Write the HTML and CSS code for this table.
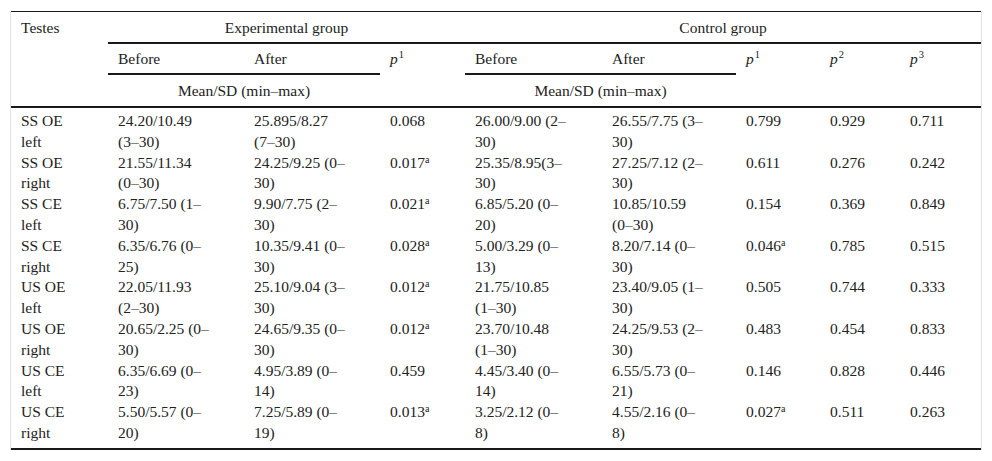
FILE: index.html
```html
<!DOCTYPE html>
<html lang="en">
<head>
<meta charset="utf-8">
<title>Table</title>
<link rel="stylesheet" href="styles.css">
</head>
<body>
<div class="wrap">
<table class="data">
  <colgroup>
    <col class="c1"><col class="c2"><col class="c3"><col class="c4"><col class="c5"><col class="c6"><col class="c7"><col class="c8"><col class="c9">
  </colgroup>
  <thead>
    <tr class="r1">
      <th rowspan="3" class="stub">Testes</th>
      <th colspan="3" class="grp">Experimental group</th>
      <th colspan="5" class="grp">Control group</th>
    </tr>
    <tr class="r2">
      <th class="sub">Before</th>
      <th class="sub">After</th>
      <th rowspan="2" class="pc"><i>p</i><sup>1</sup></th>
      <th class="sub">Before</th>
      <th class="sub">After</th>
      <th rowspan="2" class="pc"><i>p</i><sup>1</sup></th>
      <th rowspan="2" class="pc"><i>p</i><sup>2</sup></th>
      <th rowspan="2" class="pc"><i>p</i><sup>3</sup></th>
    </tr>
    <tr class="r3">
      <th colspan="2" class="mean">Mean/SD (min–max)</th>
      <th colspan="2" class="mean">Mean/SD (min–max)</th>
    </tr>
  </thead>
  <tbody>
    <tr>
      <td class="name">SS OE left</td><td class="val">24.20/10.49 (3–30)</td><td class="val">25.895/8.27 (7–30)</td><td class="p">0.068</td>
      <td class="val">26.00/9.00 (2–30)</td><td class="val">26.55/7.75 (3–30)</td><td class="p">0.799</td><td class="p">0.929</td><td class="p">0.711</td>
    </tr>
    <tr>
      <td class="name">SS OE right</td><td class="val">21.55/11.34 (0–30)</td><td class="val">24.25/9.25 (0–30)</td><td class="p">0.017<sup class="sig">a</sup></td>
      <td class="val">25.35/8.95(3–30)</td><td class="val">27.25/7.12 (2–30)</td><td class="p">0.611</td><td class="p">0.276</td><td class="p">0.242</td>
    </tr>
    <tr>
      <td class="name">SS CE left</td><td class="val">6.75/7.50 (1–30)</td><td class="val">9.90/7.75 (2–30)</td><td class="p">0.021<sup class="sig">a</sup></td>
      <td class="val">6.85/5.20 (0–20)</td><td class="val">10.85/10.59 (0–30)</td><td class="p">0.154</td><td class="p">0.369</td><td class="p">0.849</td>
    </tr>
    <tr>
      <td class="name">SS CE right</td><td class="val">6.35/6.76 (0–25)</td><td class="val">10.35/9.41 (0–30)</td><td class="p">0.028<sup class="sig">a</sup></td>
      <td class="val">5.00/3.29 (0–13)</td><td class="val">8.20/7.14 (0–30)</td><td class="p">0.046<sup class="sig">a</sup></td><td class="p">0.785</td><td class="p">0.515</td>
    </tr>
    <tr>
      <td class="name">US OE left</td><td class="val">22.05/11.93 (2–30)</td><td class="val">25.10/9.04 (3–30)</td><td class="p">0.012<sup class="sig">a</sup></td>
      <td class="val">21.75/10.85 (1–30)</td><td class="val">23.40/9.05 (1–30)</td><td class="p">0.505</td><td class="p">0.744</td><td class="p">0.333</td>
    </tr>
    <tr>
      <td class="name">US OE right</td><td class="val">20.65/2.25 (0–30)</td><td class="val">24.65/9.35 (0–30)</td><td class="p">0.012<sup class="sig">a</sup></td>
      <td class="val">23.70/10.48 (1–30)</td><td class="val">24.25/9.53 (2–30)</td><td class="p">0.483</td><td class="p">0.454</td><td class="p">0.833</td>
    </tr>
    <tr>
      <td class="name">US CE left</td><td class="val">6.35/6.69 (0–23)</td><td class="val">4.95/3.89 (0–14)</td><td class="p">0.459</td>
      <td class="val">4.45/3.40 (0–14)</td><td class="val">6.55/5.73 (0–21)</td><td class="p">0.146</td><td class="p">0.828</td><td class="p">0.446</td>
    </tr>
    <tr>
      <td class="name">US CE right</td><td class="val">5.50/5.57 (0–20)</td><td class="val">7.25/5.89 (0–19)</td><td class="p">0.013<sup class="sig">a</sup></td>
      <td class="val">3.25/2.12 (0–8)</td><td class="val">4.55/2.16 (0–8)</td><td class="p">0.027<sup class="sig">a</sup></td><td class="p">0.511</td><td class="p">0.263</td>
    </tr>
  </tbody>
</table>
</div>
</body>
</html>
```

FILE: styles.css
```css
html, body {
  margin: 0;
  padding: 0;
  background: #ffffff;
}

body {
  font-family: "Liberation Serif", "Times New Roman", serif;
  font-size: 15.5px;
  color: #222222;
}

.wrap {
  margin: 11px 0 0 10px;
  width: 970px;
  border-left: 1px solid #e2e2e2;
  border-right: 1px solid #e2e2e2;
}

.data {
  width: 970px;
  table-layout: fixed;
  border-collapse: separate;
  border-spacing: 0;
  border-top: 1px solid #1a1a1a;
  border-bottom: 2px solid #1a1a1a;
}

.c1 { width: 97px; }
.c2 { width: 136px; }
.c3 { width: 136px; }
.c4 { width: 85px; }
.c5 { width: 137px; }
.c6 { width: 134px; }
.c7 { width: 84px; }
.c8 { width: 80px; }
.c9 { width: 81px; }

th {
  font-weight: normal;
  text-align: left;
  vertical-align: top;
  line-height: 20px;
  padding: 0 10px;
}

.r1 th {
  padding-top: 6px;
  padding-bottom: 4px;
}

.r2 th {
  padding-top: 5px;
  padding-bottom: 4px;
}

.r3 th {
  padding-top: 6px;
  padding-bottom: 5px;
}

.stub {
  border-bottom: 2px solid #1a1a1a;
}

.grp {
  text-align: center;
  border-bottom: 2px solid #1a1a1a;
}

.sub {
  border-bottom: 2px solid #1a1a1a;
}

.pc {
  border-bottom: 2px solid #1a1a1a;
}

.mean {
  text-align: center;
  border-bottom: 2px solid #1a1a1a;
}

th sup {
  font-size: 10.5px;
  line-height: 0;
  vertical-align: 6px;
  margin-left: 1px;
}

td {
  vertical-align: top;
  line-height: 20.8px;
  padding: 0 10px;
}

td.name {
  padding-right: 25px;
}

td.val {
  padding-right: 32px;
}

tbody tr:first-child td {
  padding-top: 3px;
}

tbody tr:last-child td {
  padding-bottom: 4px;
}

.sig {
  font-size: 10px;
  line-height: 0;
  vertical-align: 5px;
}
```
